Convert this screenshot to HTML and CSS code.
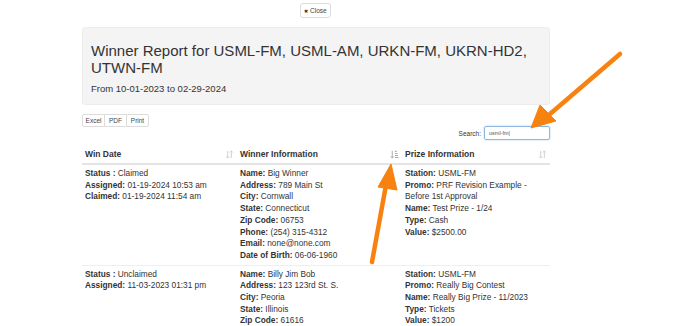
FILE: index.html
```html
<!DOCTYPE html>
<html>
<head>
<meta charset="utf-8">
<link rel="stylesheet" href="styles.css">
</head>
<body>
<div class="page">
  <div class="topbar">
    <button class="btn close-btn"><span class="x">&#10006;</span> Close</button>
  </div>
  <div class="wrap">
    <div class="jumbo">
      <h1>Winner Report for USML-FM, USML-AM, URKN-FM, UKRN-HD2, UTWN-FM</h1>
      <p>From 10-01-2023 to 02-29-2024</p>
    </div>
    <div class="btn-group">
      <button class="btn">Excel</button><button class="btn">PDF</button><button class="btn">Print</button>
    </div>
    <div class="search-row">
      <label>Search:</label>
      <div class="search-input">usml-fm|</div>
    </div>
    <table class="report">
      <thead>
        <tr>
          <th class="c1"><div class="th">Win Date<svg class="sort" viewBox="0 0 10 10"><path d="M3 1v8M1.2 7.2L3 9l1.8-1.8M7 9V1M5.2 2.8L7 1l1.8 1.8" fill="none" stroke="currentColor" stroke-width="1.1"/></svg></div></th>
          <th class="c2"><div class="th">Winner Information<svg class="sort dark" viewBox="0 0 10 10"><path d="M2.5 1v8M0.8 7.2L2.5 9l1.7-1.8" fill="none" stroke="currentColor" stroke-width="1.1"/><path d="M5.5 1.5h2M5.5 3.8h2.8M5.5 6.1h3.4M5.5 8.4h4" stroke="currentColor" stroke-width="1.2"/></svg></div></th>
          <th class="c3"><div class="th">Prize Information<svg class="sort" viewBox="0 0 10 10"><path d="M3 1v8M1.2 7.2L3 9l1.8-1.8M7 9V1M5.2 2.8L7 1l1.8 1.8" fill="none" stroke="currentColor" stroke-width="1.1"/></svg></div></th>
        </tr>
      </thead>
      <tbody>
        <tr>
          <td><b>Status :</b> Claimed<br><b>Assigned:</b> 01-19-2024 10:53 am<br><b>Claimed:</b> 01-19-2024 11:54 am</td>
          <td><b>Name:</b> Big Winner<br><b>Address:</b> 789 Main St<br><b>City:</b> Cornwall<br><b>State:</b> Connecticut<br><b>Zip Code:</b> 06753<br><b>Phone:</b> (254) 315-4312<br><b>Email:</b> none@none.com<br><b>Date of Birth:</b> 06-06-1960</td>
          <td><b>Station:</b> USML-FM<br><b>Promo:</b> PRF Revision Example - Before 1st Approval<br><b>Name:</b> Test Prize - 1/24<br><b>Type:</b> Cash<br><b>Value:</b> $2500.00</td>
        </tr>
        <tr>
          <td><b>Status :</b> Unclaimed<br><b>Assigned:</b> 11-03-2023 01:31 pm</td>
          <td><b>Name:</b> Billy Jim Bob<br><b>Address:</b> 123 123rd St. S.<br><b>City:</b> Peoria<br><b>State:</b> Illinois<br><b>Zip Code:</b> 61616</td>
          <td><b>Station:</b> USML-FM<br><b>Promo:</b> Really Big Contest<br><b>Name:</b> Really Big Prize - 11/2023<br><b>Type:</b> Tickets<br><b>Value:</b> $1200</td>
        </tr>
      </tbody>
    </table>
  </div>
  <svg class="arrows" viewBox="0 0 674 326" width="674" height="326">
    <g fill="#f7820f" stroke="#f7820f">
      <line x1="620" y1="54" x2="550" y2="114" stroke-width="4.5" stroke-linecap="round"/>
      <polygon points="531,128 540,105 556,121" stroke-width="1" stroke-linejoin="round"/>
      <line x1="372" y1="262" x2="386" y2="185" stroke-width="4.5" stroke-linecap="round"/>
      <polygon points="391,164 378,187 397,190" stroke-width="1" stroke-linejoin="round"/>
    </g>
  </svg>
</div>
</body>
</html>
```
FILE: styles.css
```css
* { box-sizing: border-box; }
html, body { margin: 0; padding: 0; background: #fff; }
body {
  font-family: "Liberation Sans", Arial, Helvetica, sans-serif;
  color: #333;
  font-size: 8.5px;
}
.page { position: relative; width: 674px; height: 326px; overflow: hidden; }
.topbar { height: 21px; padding-top: 3px; padding-left: 300px; }
.btn {
  font-family: "Liberation Sans", Arial, sans-serif;
  background: #fff;
  border: 1px solid #ddd;
  color: #444;
  font-size: 6.5px;
  padding: 0;
  width: 23px;
  height: 13px;
  line-height: 11px;
  margin: 0;
}
.close-btn { height: 15px; width: 31px; padding: 0; border-radius: 3px; line-height: 13px; }
.close-btn .x { font-size: 5px; color: #333; }
.wrap { margin-left: 82px; width: 468px; }
.jumbo {
  margin-top: 6px;
  background: #f4f4f4;
  border: 1px solid #ececec;
  border-radius: 3px;
  height: 78px;
  padding: 14px 8px 0 8px;
}
.jumbo h1 {
  margin: 0;
  font-weight: normal;
  font-size: 15px;
  line-height: 17px;
  color: #333;
}
.jumbo p { margin: 7px 0 0; font-size: 9.5px; line-height: 12px; }
.btn-group { margin-top: 9px; display: flex; height: 13px; }
.btn-group .btn { border-radius: 0; margin-left: -1px; }
.btn-group .btn:first-child { margin-left: 0; border-radius: 2px 0 0 2px; }
.btn-group .btn:last-child { border-radius: 0 2px 2px 0; }
.search-row {
  display: flex; justify-content: flex-end; align-items: center;
  gap: 3px; height: 14px; margin-top: -1px;
}
.search-row label { font-size: 6.5px; color: #333; }
.search-input {
  width: 66px; height: 14px;
  border: 1px solid #8fb8e0;
  border-radius: 2px;
  box-shadow: 0 0 2px rgba(102,175,233,.6);
  font-size: 5.5px; color: #555;
  padding: 0 4px; line-height: 12px;
}
.report { width: 468px; border-collapse: collapse; margin-top: 4px; table-layout: fixed; }
.report th.c1 { width: 155px; }
.report th.c2 { width: 165px; }
.report th.c3 { width: 148px; }
.report th {
  text-align: left; font-size: 8.5px; font-weight: bold;
  padding: 5px 3px 4px 3px;
  border-bottom: 2px solid #e4e4e4;
}
.th { display: flex; justify-content: space-between; align-items: center; }
.sort { width: 9px; height: 9px; color: #d0d0d0; }
.sort.dark { color: #aaa; }
.report td {
  vertical-align: top;
  padding: 3px 3px 3px 3px;
  line-height: 11.7px;
  border-bottom: 1px solid #eee;
  font-size: 8.3px;
}
.report td b { color: #333; }
.arrows { position: absolute; left: 0; top: 0; pointer-events: none; }
```
